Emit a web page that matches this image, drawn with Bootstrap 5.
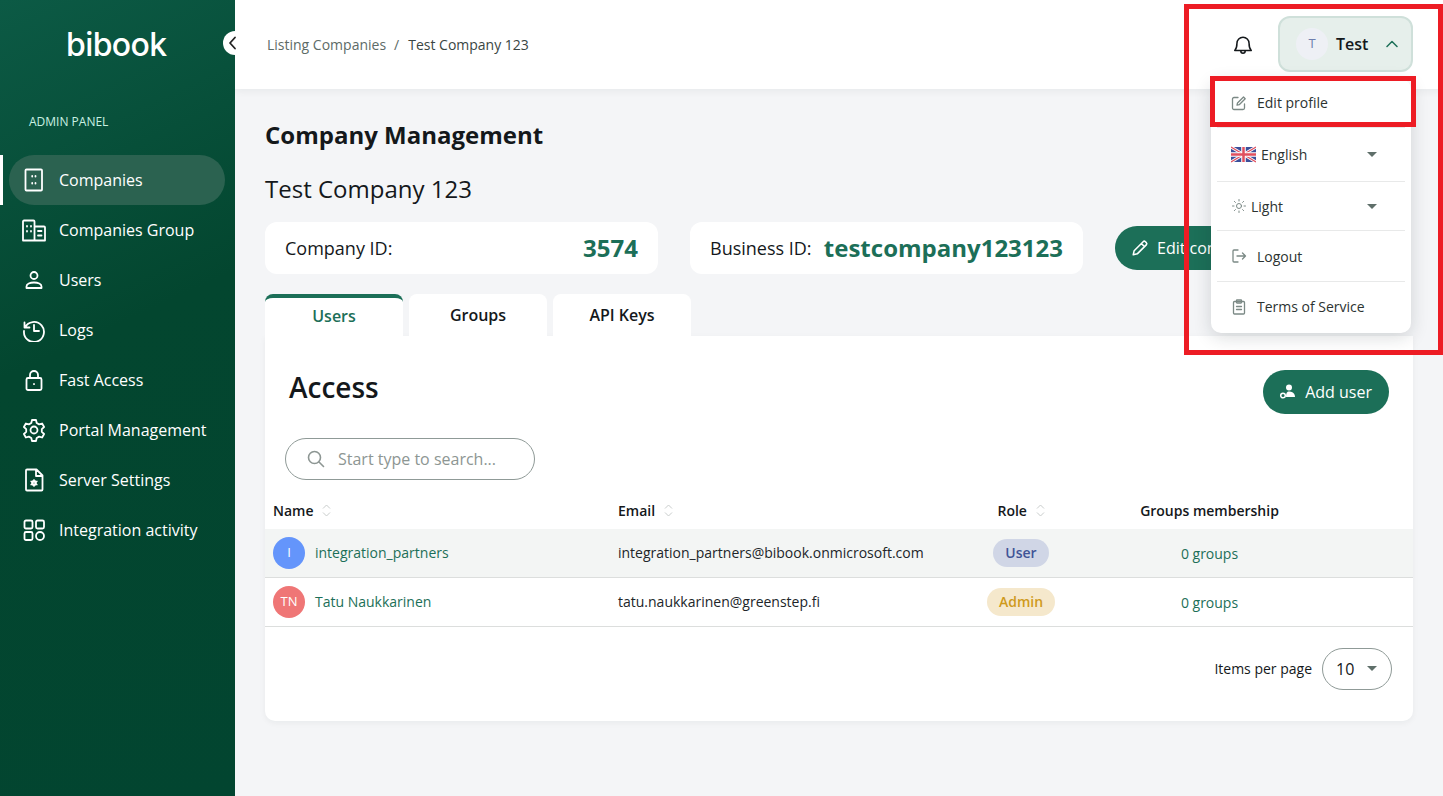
<!DOCTYPE html>
<html lang="en">
<head>
  <meta charset="UTF-8">
  <title>Company Management - bibook</title>
  <meta name="viewport" content="width=device-width, initial-scale=1">
  <link href="https://cdn.jsdelivr.net/npm/bootstrap@5.3.3/dist/css/bootstrap.min.css" rel="stylesheet">
  <style>
    html, body { height: 100%; }
    body { font-family: "Open Sans", sans-serif; background: #f4f5f7; color: #14181b; overflow: hidden; position: relative; }
    .shell { height: 796px; }
    .side { width: 235px; flex: none; color: #fff; background: linear-gradient(155deg, #0c5a45 0%, #03462f 42%, #024530 100%); position: relative; }
    .logo { height: 89px; padding-left: 66px; font-family: Inter, sans-serif; font-weight: 500; font-size: 32px; letter-spacing: -.6px; line-height: 89px; }
    .panel-label { font-size: 12px; color: #c9f1e2; padding: 24px 0 0 29px; height: 66px; line-height: 17px; }
    .side-link { height: 50px; margin-left: 9px; width: 216px; padding-left: 13px; border-radius: 25px; color: #fff; font-size: 16px; text-decoration: none; }
    .side-link svg { width: 24px; height: 24px; flex: none; margin-right: 13px; fill: none; stroke: #fff; stroke-width: 1.8; stroke-linecap: round; stroke-linejoin: round; }
    .side-link.on { background: #2b6250; position: relative; }
    .side-link.on::before { content: ""; position: absolute; left: -9px; top: 0; bottom: 0; width: 3px; background: #fff; }
    .collapse-dot { position: absolute; left: 223px; top: 31px; width: 24px; height: 24px; border-radius: 50%; background: #fff; }
    .collapse-dot svg { position: absolute; left: 4px; top: 5px; }
    .topbar { height: 89px; background: #fff; box-shadow: 0 2px 8px rgba(20, 30, 40, .06); padding: 0 30px 0 32px; }
    .crumbs { font-size: 14px; color: #5d6b67; }
    .crumbs i { font-style: normal; margin: 0 9px 0 8px; }
    .crumbs b { font-weight: 400; color: #3a4643; }
    .user-chip { width: 135px; height: 56px; margin-bottom: 1px; background: #e6efeb; border: 2px solid #cfe0da; border-radius: 12px; padding-left: 16px; font-weight: 600; font-size: 16px; }
    .user-avatar { width: 32px; height: 32px; border-radius: 50%; background: #eef0f5; color: #6f7fae; font-size: 13px; font-weight: 400; margin-right: 8px; }
    .chip-arrow { margin-right: 13px; }
    .page-body { padding: 0 30px; }
    .page-title { font-size: 24px; font-weight: 700; margin: 28px 0 0; line-height: 36px; }
    .company-name { font-size: 24px; font-weight: 400; margin: 18px 0 0; line-height: 36px; }
    .id-box { height: 52px; width: 393px; background: #fff; border-radius: 12px; padding: 0 20px; font-size: 18px; }
    .id-val { font-size: 24px; font-weight: 700; color: #1c6f58; }
    .info-row { margin-top: 15px; gap: 32px; }
    .pill-green { background: #1c6f58; color: #fff; border: 0; border-radius: 22px; height: 44px; font-size: 16px; }
    .pill-green svg { fill: none; stroke: #fff; stroke-width: 1.7; stroke-linecap: round; stroke-linejoin: round; }
    .add-btn { padding-left: 16px; padding-right: 17px; }
    .tab-row { margin-top: 20px; gap: 6px; }
    .tab-item { width: 138px; height: 42px; background: #fff; border-radius: 8px 8px 0 0; font-weight: 600; font-size: 16px; }
    .tab-item.on { border-top: 4px solid #1c6f58; color: #1c6f58; padding-bottom: 2px; }
    .access-card { height: 385px; background: #fff; border-radius: 0 0 10px 10px; box-shadow: 0 2px 6px rgba(20, 30, 40, .05); }
    .access-top { padding: 34px 24px 0; height: 102px; }
    .access-title { font-size: 28px; font-weight: 600; margin: -1px 0 0; line-height: 36px; }
    .search-pill { margin-left: 20px; width: 250px; height: 42px; border: 1px solid #8f9a97; border-radius: 21px; padding-left: 20px; color: #8d9693; font-size: 16px; }
    .user-table { table-layout: fixed; width: 1148px; margin: 10px 0 0; font-size: 14px; }
    .user-table th { font-weight: 600; height: 39px; padding: 2px 0 0 8px; vertical-align: middle; border: 0; color: #14181b; }
    .user-table td { height: 49px; padding: 0 0 0 8px; vertical-align: middle; border-bottom: 1px solid #dcdedd; background: transparent; box-shadow: none; }
    .user-table tr.shaded td { background: #f3f5f4; height: 48px; }
    .user-table td.group-cell { padding-top: 2px; }
    .col-a { width: 345px; } .col-b { width: 362px; } .col-c { width: 90px; } .col-d { width: 287px; } .col-e { width: 64px; }
    .sort-mark { display: inline-block; vertical-align: -1px; margin-left: 5px; }
    .face { width: 32px; height: 32px; border-radius: 50%; color: #fff; font-size: 13px; margin-right: 10px; }
    .face-blue { background: #6495fb; } .face-red { background: #ef7676; }
    .name-link, .group-link { color: #1c6f58; }
    .role-pill { display: inline-block; border-radius: 14px; height: 28px; line-height: 27px; font-weight: 600; }
    .role-user { background: #d0d6e6; color: #3f5496; width: 56px; }
    .role-admin { background: #f5e8cc; color: #cf9a1c; width: 68px; }
    .pager { padding: 21px 21px 0 0; font-size: 14px; }
    .size-pill { width: 70px; height: 42px; border: 1px solid #8f9a97; border-radius: 21px; margin-left: 10px; padding: 0 14px 0 13px; font-size: 16px; }
    .caret-down { width: 0; height: 0; border-left: 5px solid transparent; border-right: 5px solid transparent; border-top: 5px solid #5f6f6a; display: inline-block; }
    .user-menu { display: block; position: absolute; left: 1211px; top: 79px; width: 200px; height: 254px; padding: 0; border: 0; border-radius: 10px; background: #fff; box-shadow: 0 4px 18px rgba(20, 30, 40, .16); font-size: 14px; color: #2c3331; }
    .menu-row { height: 49px; padding: 0 34px 0 20px; }
    .menu-row svg.ico { fill: none; stroke: #7b8985; stroke-width: 1.3; stroke-linecap: round; stroke-linejoin: round; flex: none; margin-right: 10px; }
    .menu-row svg.sun { margin-right: 4px; stroke-width: 1; }
    .menu-row svg.flag { flex: none; margin-right: 5px; }
    .menu-line { margin: 0 6px; border-top: 1px solid #e8e9e9; }
    .row-a { height: 47px; margin-bottom: 1px; } .row-b { height: 53px; } .row-c { height: 48px; } .row-d { height: 50px; }
    .mark-box { position: absolute; z-index: 1100; border: 5px solid #ed1c24; pointer-events: none; }
    .mark-outer { left: 1184px; top: 4px; width: 259px; height: 351px; }
    .mark-inner { left: 1210px; top: 76px; width: 206px; height: 51px; }
  </style>
</head>
<body>

<div class="shell d-flex">
  <!-- sidebar -->
  <aside class="side">
    <div class="logo">bibook</div>
    <div class="panel-label">ADMIN PANEL</div>
    <nav class="d-flex flex-column">
      <a class="side-link on d-flex align-items-center" href="#">
        <svg viewBox="0 0 24 24"><rect x="3.500" y="1.500" width="16.500" height="21" rx="1"/><path d="M10.200 8v.6M13.500 8v.6M10.200 15v.6M13.500 15v.6"/></svg>Companies</a>
      <a class="side-link d-flex align-items-center" href="#">
        <svg viewBox="0 0 24 24"><path d="M1 22.500V3.500a1 1 0 0 1 1-1h9.500a1 1 0 0 1 1 1v19zM12.500 8.500H22a1 1 0 0 1 1 1v13H12.500M5 8v.5M9 8v.5M5 13v.5M9 13v.5M16 13h3.500M16 17.500h3.500"/></svg>Companies Group</a>
      <a class="side-link d-flex align-items-center" href="#">
        <svg viewBox="0 0 24 24"><circle cx="12" cy="7.500" r="3.500"/><path d="M4.500 20v-1.500c0-2.500 3.500-4 7.500-4s7.500 1.500 7.500 4V20z"/></svg>Users</a>
      <a class="side-link d-flex align-items-center" href="#">
        <svg viewBox="0 0 24 24"><path d="M2.500 4.500v5h5M3 9.500A10 10 0 1 1 2 13"/><path d="M12 7v6h5"/></svg>Logs</a>
      <a class="side-link d-flex align-items-center" href="#">
        <svg viewBox="0 0 24 24"><rect x="4.500" y="10" width="15" height="12" rx="1.500"/><path d="M8 10V7a4 4 0 0 1 8 0v3M12 16v.2"/></svg>Fast Access</a>
      <a class="side-link d-flex align-items-center" href="#">
        <svg viewBox="0 0 24 24"><circle cx="12" cy="12" r="3.500"/><path d="M10 2h4l.7 3 2.400 1.400 3-.9 2 3.500-2.300 2.100v2.800l2.300 2.100-2 3.500-3-.9-2.400 1.400-.7 3h-4l-.7-3-2.400-1.400-3 .9-2-3.500 2.300-2.100v-2.800L1.900 9l2-3.500 3 .9L9.300 5z"/></svg>Portal Management</a>
      <a class="side-link d-flex align-items-center" href="#">
        <svg viewBox="0 0 24 24"><path d="M5 1.500h9.500L20.500 7.500V21.500a1 1 0 0 1-1 1H5a1 1 0 0 1-1-1V2.500a1 1 0 0 1 1-1zM14 1.500V8h6.500"/><circle cx="12" cy="15" r="1.700" stroke-width="2.400"/><path d="M12 11.700v.5M12 17.800v.5M9 13.300l.4.3M14.600 16.400l.4.300M9 16.700l.4-.3M14.600 13.600l.4-.3" stroke-width="1.400"/></svg>Server Settings</a>
      <a class="side-link d-flex align-items-center" href="#">
        <svg viewBox="0 0 24 24"><rect x="2.500" y="2.500" width="8" height="8" rx="1.500"/><rect x="14" y="2.500" width="8" height="8" rx="1.500"/><rect x="2.500" y="14" width="8" height="8" rx="1.500"/><circle cx="18" cy="18" r="4"/></svg>Integration activity</a>
    </nav>
    <div class="collapse-dot"><svg width="12" height="14" viewBox="0 0 12 14" fill="none" stroke="#222" stroke-width="1.800" stroke-linecap="round" stroke-linejoin="round"><path d="M8 1.500 3 7l5 5.500"/></svg></div>
  </aside>

  <div class="flex-grow-1">
    <header class="topbar d-flex align-items-center">
      <div class="crumbs">Listing Companies<i>/</i><b>Test Company 123</b></div>
      <div class="ms-auto d-flex align-items-center">
        <svg class="me-4" width="22" height="22" viewBox="0 0 20 20" fill="none" stroke="#14181b" stroke-width="1.400" stroke-linecap="round" stroke-linejoin="round"><path d="M2.500 15c1.500-1.500 2-3 2-6.500a5.500 5.500 0 0 1 11 0c0 3.500.5 5 2 6.500zM8 15v.5a2 2 0 0 0 4 0V15"/></svg>
        <div class="user-chip d-flex align-items-center">
          <span class="user-avatar d-flex align-items-center justify-content-center">T</span>
          <span>Test</span>
          <svg class="ms-auto chip-arrow" width="12" height="8" viewBox="0 0 12 8" fill="none" stroke="#1c6f58" stroke-width="1.500" stroke-linecap="round" stroke-linejoin="round"><path d="M1 6.500 6 1.500l5 5"/></svg>
        </div>
      </div>
    </header>

    <main class="page-body">
      <h1 class="page-title">Company Management</h1>
      <h2 class="company-name">Test Company 123</h2>

      <div class="info-row d-flex align-items-center">
        <div class="id-box d-flex align-items-center justify-content-between"><span>Company ID:</span><span class="id-val">3574</span></div>
        <div class="id-box d-flex align-items-center justify-content-between"><span>Business ID:</span><span class="id-val">testcompany123123</span></div>
        <button class="pill-green btn d-flex align-items-center gap-2 px-3 text-nowrap" type="button">
          <svg width="18" height="18" viewBox="0 0 20 20"><path d="M2.500 17.500 3.500 13 13.500 3a1.800 1.800 0 0 1 2.500 0l1 1a1.800 1.800 0 0 1 0 2.500L7 16.500zM11.500 5l3.500 3.500"/></svg>Edit company</button>
      </div>

      <div class="tab-row d-flex">
        <div class="tab-item on d-flex align-items-center justify-content-center">Users</div>
        <div class="tab-item d-flex align-items-center justify-content-center">Groups</div>
        <div class="tab-item d-flex align-items-center justify-content-center">API Keys</div>
      </div>

      <section class="access-card">
        <div class="access-top d-flex justify-content-between align-items-start">
          <h3 class="access-title">Access</h3>
          <button class="pill-green add-btn btn d-flex align-items-center gap-2" type="button">
            <svg width="18" height="18" viewBox="0 0 18 18"><circle cx="10" cy="4.500" r="3" fill="#fff" stroke="none"/><path d="M7 14c0-4 1-5.500 3-5.500s6 1 6 5.500z" fill="#fff" stroke="none"/><circle cx="4" cy="12.500" r="2.300" stroke-width="1.500"/></svg>Add user</button>
        </div>

        <div class="search-pill d-flex align-items-center">
          <svg class="me-2" width="20" height="20" viewBox="0 0 20 20" fill="none" stroke="#8d9693" stroke-width="1.600" stroke-linecap="round"><circle cx="8.500" cy="8.500" r="6"/><path d="m13 13 4.500 4.500"/></svg>
          <span class="ms-1">Start type to search...</span>
        </div>

        <table class="table user-table mb-0">
          <colgroup><col class="col-a"><col class="col-b"><col class="col-c"><col class="col-d"><col class="col-e"></colgroup>
          <thead>
            <tr>
              <th>Name <svg class="sort-mark" width="9" height="13" viewBox="0 0 9 13" fill="none" stroke="#c9cdcc" stroke-width="1"><path d="m1 4.500 3.500-3.500L8 4.500M1 8.500 4.500 12 8 8.500"/></svg></th>
              <th>Email <svg class="sort-mark" width="9" height="13" viewBox="0 0 9 13" fill="none" stroke="#c9cdcc" stroke-width="1"><path d="m1 4.500 3.500-3.500L8 4.500M1 8.500 4.500 12 8 8.500"/></svg></th>
              <th class="text-center text-nowrap">Role <svg class="sort-mark" width="9" height="13" viewBox="0 0 9 13" fill="none" stroke="#c9cdcc" stroke-width="1"><path d="m1 4.500 3.500-3.500L8 4.500M1 8.500 4.500 12 8 8.500"/></svg></th>
              <th class="text-center">Groups membership</th>
              <th></th>
            </tr>
          </thead>
          <tbody>
            <tr class="shaded">
              <td><div class="d-flex align-items-center"><span class="face face-blue d-flex align-items-center justify-content-center">I</span><span class="name-link">integration_partners</span></div></td>
              <td>integration_partners@bibook.onmicrosoft.com</td>
              <td class="text-center"><span class="role-pill role-user">User</span></td>
              <td class="text-center group-cell"><span class="group-link">0 groups</span></td>
              <td></td>
            </tr>
            <tr>
              <td><div class="d-flex align-items-center"><span class="face face-red d-flex align-items-center justify-content-center">TN</span><span class="name-link">Tatu Naukkarinen</span></div></td>
              <td>tatu.naukkarinen@greenstep.fi</td>
              <td class="text-center"><span class="role-pill role-admin">Admin</span></td>
              <td class="text-center group-cell"><span class="group-link">0 groups</span></td>
              <td></td>
            </tr>
          </tbody>
        </table>

        <div class="pager d-flex justify-content-end align-items-center">
          <span>Items per page</span>
          <div class="size-pill d-flex align-items-center justify-content-between"><span>10</span><i class="caret-down"></i></div>
        </div>
      </section>
    </main>
  </div>
</div>

<!-- open user menu -->
<div class="dropdown-menu user-menu">
  <div class="menu-row row-a d-flex align-items-center">
    <svg class="ico" width="16" height="16" viewBox="0 0 16 16"><path d="M13.500 9v4a1.500 1.500 0 0 1-1.500 1.500H3A1.500 1.500 0 0 1 1.500 13V4A1.500 1.500 0 0 1 3 2.500h4"/><path d="M6 10.200 6.500 8l6-6 1.700 1.700-6 6z"/></svg>
    <span>Edit profile</span>
  </div>
  <div class="menu-line"></div>
  <div class="menu-row row-b d-flex align-items-center justify-content-between">
    <span class="d-flex align-items-center">
      <svg class="flag" width="25" height="17" viewBox="0 0 60 36"><rect width="60" height="36" fill="#3b4f9a"/><path d="M0 0 60 36M60 0 0 36" stroke="#fff" stroke-width="7"/><path d="M0 0 60 36M60 0 0 36" stroke="#e0505f" stroke-width="3"/><path d="M30 0v36M0 18h60" stroke="#fff" stroke-width="11"/><path d="M30 0v36M0 18h60" stroke="#e0505f" stroke-width="6"/></svg>
      English
    </span>
    <i class="caret-down"></i>
  </div>
  <div class="menu-line"></div>
  <div class="menu-row row-c d-flex align-items-center justify-content-between">
    <span class="d-flex align-items-center">
      <svg class="ico sun" width="16" height="16" viewBox="0 0 16 16"><circle cx="8" cy="8" r="2.500"/><path d="M8 1.500v1.500M8 13v1.500M1.500 8H3M13 8h1.500M3.400 3.400l1 1M11.600 11.600l1 1M3.400 12.600l1-1M11.600 4.400l1-1"/></svg>
      Light
    </span>
    <i class="caret-down"></i>
  </div>
  <div class="menu-line"></div>
  <div class="menu-row row-d d-flex align-items-center">
    <svg class="ico" width="16" height="16" viewBox="0 0 16 16"><path d="M7 2H3a1 1 0 0 0-1 1v10a1 1 0 0 0 1 1h4M6 8h8.500M11.500 5l3 3-3 3"/></svg>
    <span>Logout</span>
  </div>
  <div class="menu-line"></div>
  <div class="menu-row d-flex align-items-center">
    <svg class="ico" width="16" height="16" viewBox="0 0 16 16"><rect x="2.500" y="2.500" width="11" height="12.500" rx="1"/><rect x="5.500" y="1" width="5" height="3" rx=".5"/><path d="M5.500 7.500h5M5.500 10.500h5"/></svg>
    <span>Terms of Service</span>
  </div>
</div>

<!-- annotation frames from the screenshot -->
<div class="mark-box mark-outer"></div>
<div class="mark-box mark-inner"></div>

<script src="https://cdn.jsdelivr.net/npm/bootstrap@5.3.3/dist/js/bootstrap.bundle.min.js"></script>
</body>
</html>
